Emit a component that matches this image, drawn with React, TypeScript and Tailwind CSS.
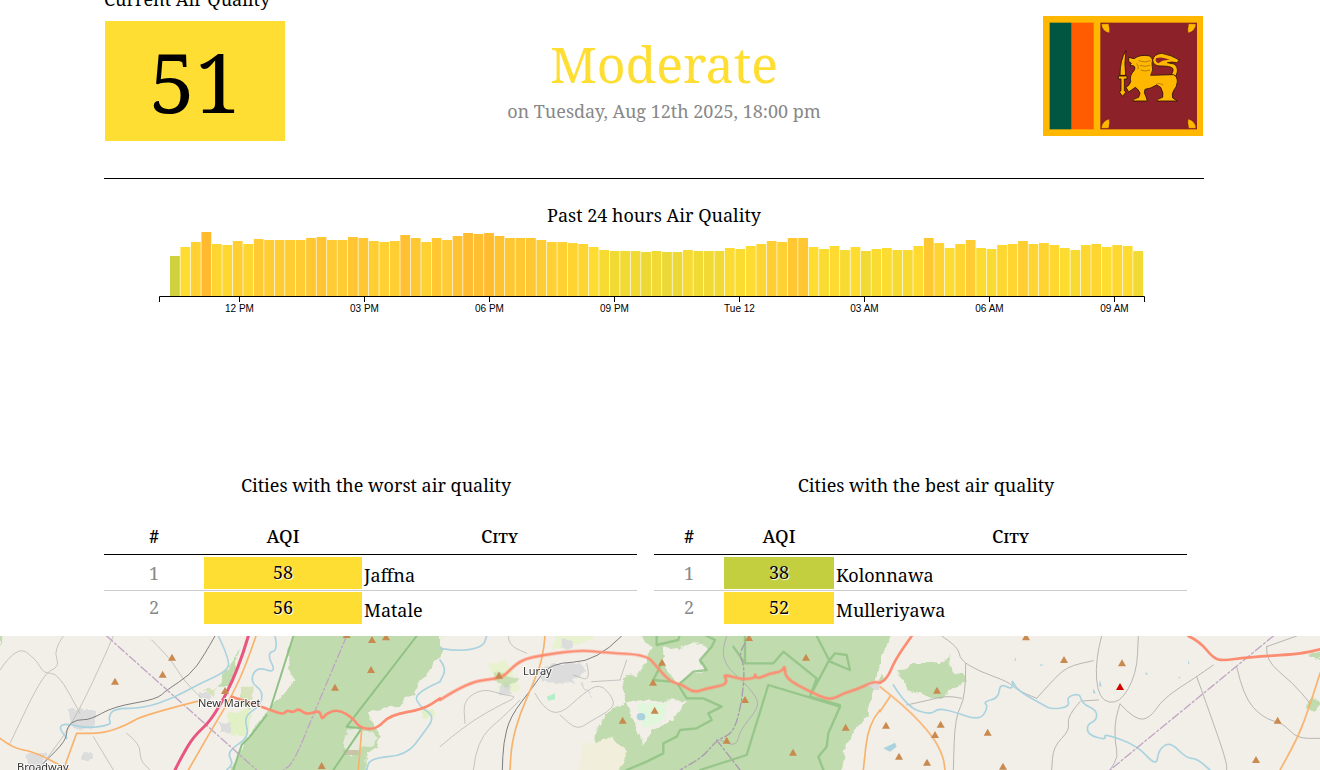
const serif = "font-['Noto_Serif','Droid_Serif','DejaVu_Serif',serif]"

const barTops = [
  168, 141, 126, 96, 132, 135, 123, 132, 117, 120, 120, 120, 120, 114, 111, 120, 120, 111, 114, 123, 126, 123, 105, 114,
  126, 114, 120, 108, 99, 102, 99, 108, 114, 114, 114, 120, 126, 126, 129, 132, 141, 150, 153, 153, 153, 156, 153, 156,
  156, 150, 153, 153, 153, 144, 147, 138, 132, 123, 126, 114, 114, 141, 147, 138, 150, 141, 153, 147, 144, 150, 150, 138,
  114, 129, 144, 132, 120, 144, 147, 135, 132, 123, 132, 129, 135, 144, 150, 135, 132, 141, 135, 138, 153,
]

const stops: [number, number[]][] = [
  [40, [207, 210, 62]],
  [44, [236, 217, 53]],
  [46, [247, 219, 51]],
  [49, [255, 220, 48]],
  [56, [255, 204, 51]],
  [64, [255, 186, 48]],
]

function barColor(h: number) {
  for (let i = 1; i < stops.length; i++) {
    if (h <= stops[i][0]) {
      const [h0, c0] = stops[i - 1]
      const [h1, c1] = stops[i]
      const t = (h - h0) / (h1 - h0)
      return `rgb(${c0.map((c, k) => Math.round(c + (c1[k] - c) * t)).join(',')})`
    }
  }
  return 'rgb(255,186,48)'
}

const ticks = [
  [239.5, '12 PM'],
  [364.5, '03 PM'],
  [489.5, '06 PM'],
  [614.5, '09 PM'],
  [739.5, 'Tue 12'],
  [864.5, '03 AM'],
  [989.5, '06 AM'],
  [1114.5, '09 AM'],
] as const

function Flag() {
  return (
    <svg className="mt-[-5px] h-[120px] w-[160px] shrink-0" viewBox="39 48 480 360">
      <rect x="39" y="48" width="480" height="360" fill="#ffb700" />
      <rect x="59" y="68" width="66" height="320" fill="#005641" />
      <rect x="125" y="68" width="66" height="320" fill="#ff5b00" />
      <rect x="211" y="68" width="290" height="320" fill="#8d2129" />
      {/* corner leaves */}
      <g fill="#ffb700" stroke="#5c1a10" strokeWidth="1">
        <path d="M214 72 L236 71 Q240 86 238 99 Q216 94 214 72z" />
        <path d="M498 72 L476 71 Q472 86 474 99 Q496 94 498 72z" />
        <path d="M214 385 L236 385 Q240 370 238 357 Q216 362 214 385z" />
        <path d="M498 385 L476 385 Q472 370 474 357 Q496 362 498 385z" />
      </g>
      <g fill="#ffb700" stroke="#2e1206" strokeWidth="2.5">
        {/* sword */}
        <path d="M288 152 Q270 178 270 226 L287 226 Q282 190 288 152z" />
        <path d="M265 228 L291 228 L291 237 L283 237 L283 272 L288 276 L278 289 L268 276 L273 272 L273 237 L265 237z" />
        {/* tail */}
        <path d="M368 180 Q372 162 395 160 Q425 165 448 180 L440 188 Q425 184 412 188 L432 192 Q444 200 442 216 Q440 228 432 232 L425 222 Q432 212 428 205 Q420 198 395 198 Q370 200 368 180z" />
        {/* lion */}
        <path d="M296 172 L312 176 Q330 162 360 168 Q372 178 366 192 Q372 210 362 226 L430 224 Q442 228 442 245 Q440 262 432 270 Q424 282 428 294 L442 303 L380 303 Q382 296 398 292 Q402 280 392 262 L380 255 Q362 266 345 268 Q340 278 348 290 L352 303 L308 303 Q310 296 326 292 L330 280 Q326 268 316 262 L296 276 L288 262 Q300 255 302 245 Q298 225 312 212 Q318 205 312 198 L300 196 L304 190 L296 184z" />
      </g>
      <path d="M378 175 Q395 168 420 180 Q398 178 385 190 Q374 185 378 175z" fill="#8d2129" />
      <path d="M326 182 q20 8 36 0 M330 196 q16 6 30 0 M332 210 q14 6 28 0 M320 190 q8 10 4 18 M400 255 q-10 -8 -22 -2" fill="none" stroke="#6b3a10" strokeWidth="1.4" />
    </svg>
  )
}

function Chart() {
  return (
    <svg className="ml-[55px] mt-px block h-[90px] w-[990px]" viewBox="159 230 990 90">
      {barTops.map((top, i) => {
        const h = (288 - top) / 3
        return <rect key={i} x={170 + i * 10.47} y={296 - h} width={9.8} height={h} fill={barColor(h)} />
      })}
      <path d="M159.5 302 V296.5 H1144.5 V302" fill="none" stroke="#000" />
      {ticks.map(([x, label]) => (
        <g key={label}>
          <line x1={x} x2={x} y1={296} y2={302} stroke="#000" />
          <text x={x} y={312} textAnchor="middle" fontSize={10} fontFamily="'Liberation Sans', sans-serif" fill="#000">
            {label}
          </text>
        </g>
      ))}
    </svg>
  )
}

type Row = { rank: number; aqi: number; color: string; city: string }

function CityTable({ title, rows, first, second, className }: { title: string; rows: Row[]; first: string; second: string; className: string }) {
  return (
    <div className={className}>
      <h3 className="pl-[11px] text-center text-[18px] leading-[27px] font-normal text-black">{title}</h3>
      <table className="mt-[22px] w-[533px] table-fixed border-collapse text-[18px] text-black">
        <colgroup>
          <col className={first} />
          <col className={second} />
          <col />
        </colgroup>
        <thead>
          <tr className="h-[33px] border-b border-b-black">
            <th className="pb-[2px] font-bold">#</th>
            <th className="pb-[2px] font-medium">AQI</th>
            <th className="pb-[2px] font-medium [font-variant:small-caps]">City</th>
          </tr>
        </thead>
        <tbody>
          {rows.map((r, i) => (
            <tr key={r.rank} className="border-b border-b-[#ccc] last:border-b-0">
              <td className={`p-0 text-center text-[#888] ${i === 0 ? 'pt-[2px]' : ''}`}>{r.rank}</td>
              <td className={`p-0 ${i === 0 ? 'pt-[2px] pb-px' : 'pt-px'}`}>
                <div className={`flex h-[32px] items-center justify-center ${r.color} [text-shadow:1px_1px_1px_#fff]`}>{r.aqi}</div>
              </td>
              <td className={`p-0 pl-[2px] ${i === 0 ? 'pt-[6px]' : 'pt-[6px]'}`}>{r.city}</td>
            </tr>
          ))}
        </tbody>
      </table>
    </div>
  )
}

const triangles: [number, number, number][] = [
  [0, 516, 83], [0, 488, 134], [0, 345, 155], [0, 675, 183], [0, 1116, 30], [0, 1158, 22], [0, 1040, 15], [0, 1113, 120], [0, 1005, 173], [0, 965, 408],
  [440, 927, 24], [440, 666, 98], [440, 1098, 83], [440, 177, 137], [440, 639, 158], [440, 915, 210], [440, 644, 242], [440, 548, 272], [440, 1217, 293], [440, 860, 332], [440, 1059, 368],
  [880, 438, 22], [880, 552, 90], [880, 726, 100], [880, 171, 182], [880, 18, 287], [880, 182, 284], [880, 165, 315], [880, 323, 308], [880, 57, 380], [880, 141, 398], [880, 369, 410], [880, 1193, 272], [880, 1128, 390],
]

// round off the traced polylines: quadratic through the midpoints
function smooth(d: string) {
  return d
    .split('M')
    .filter((s) => s.trim())
    .map((sub) => {
      const n = sub.match(/-?\d+(\.\d+)?/g)!.map(Number)
      const p: number[][] = []
      for (let i = 0; i < n.length; i += 2) p.push([n[i], n[i + 1]])
      let out = `M${p[0][0]} ${p[0][1]}`
      for (let i = 1; i < p.length - 1; i++) {
        out += ` Q${p[i][0]} ${p[i][1]} ${(p[i][0] + p[i + 1][0]) / 2} ${(p[i][1] + p[i + 1][1]) / 2}`
      }
      const last = p[p.length - 1]
      return `${out} L${last[0]} ${last[1]}`
    })
    .join(' ')
}

// everything below is traced in zoom space: x = x0 + zx / 3, y = 630 + zy / 3
const Z = ({ x0, children }: { x0: number; children: React.ReactNode }) => (
  <g transform={`translate(${x0} 630) scale(0.33333)`} fill="none" strokeLinejoin="round" strokeLinecap="round">
    {children}
  </g>
)

const Line = ({ d, stroke, w, ...rest }: { d: string; stroke: string; w: number; opacity?: number; strokeDasharray?: string }) => (
  <path d={smooth(d)} stroke={stroke} strokeWidth={w} {...rest} />
)

function MapView() {
  return (
    <svg className="block h-[134px] w-[1320px]" viewBox="0 636 1320 134">
      <defs>
        <filter id="rough" x="0" y="620" width="1320" height="170" filterUnits="userSpaceOnUse">
          <feTurbulence type="fractalNoise" baseFrequency="0.09" numOctaves="3" seed="4" result="noise" />
          <feDisplacementMap in="SourceGraphic" in2="noise" scale="9" xChannelSelector="R" yChannelSelector="G" />
        </filter>
      </defs>
      <rect x="0" y="636" width="1320" height="134" fill="#f2efe9" />
      {/* forests */}
      <g filter="url(#rough)">
        <Z x0={0}>
          <path d="M880 0 L1320 0 L1320 75 L1240 190 L1200 225 L1100 250 L1130 300 L1150 325 L1100 375 L1100 440 L680 440 L730 340 L790 260 L840 200 L890 150 L860 100z" fill="#c0dbad" />
          <path d="M0 0 L15 0 L0 50z" fill="#c0dbad" />
          <path d="M1040 300 L1085 295 L1140 330 L1050 380 L1030 340z" fill="#f2efe9" opacity="0.75" />
          <path d="M650 170 L720 60 L690 170z" fill="#c0dbad" />
          <path d="M680 250 L750 235 L740 320 L690 310z" fill="#e2f0c5" />
          <path d="M620 180 L650 170 L640 200z M720 170 L755 170 L750 240 L720 220z" fill="#d6e3bb" />
          <path d="M205 240 h80 v55 h-60z M600 190 h30 v20 h-30z M80 370 h55 v60 h-55z M660 280 h30 v25 h-30z M250 370 h25 v20 h-25z" fill="#dcdcdc" />
          <path d="M1265 240 h35 l5 20 h-40z" fill="#e2f0c5" />
        </Z>
        <Z x0={440}>
          <path d="M0 0 H30 L10 40z M340 0 H500 L380 60 L340 60z M140 95 L200 90 L240 180 L180 190z" fill="#e8f2cf" />
          <path d="M560 0 L1320 0 L1320 100 L1280 260 L1230 310 L1200 440 L470 440 L470 300 L500 250 L560 215 L545 150 L600 130 L640 45z" fill="#c0dbad" />
          <path d="M665 60 L770 40 L815 50 L780 90 L790 120 L740 130 L715 165 L680 130z" fill="#f2efe9" />
          <path d="M560 215 L740 210 L700 270 L640 300 L610 345 L590 300 L570 240z" fill="#f2efe9" />
          <path d="M590 225 L690 215 L660 280 L610 290z" fill="#e0f7dc" />
          <path d="M430 340 L520 325 L560 370 L530 440 L410 440z" fill="#f1efdc" />
          <path d="M330 100 H420 L440 125 L400 150 L470 215 L430 165 L360 160 L300 150 L290 125z M180 160 h30 v35 h-30z" fill="#dcdcdc" />
          <path d="M365 28 h35 v30 h-35z" fill="#dcdcdc" />
          <path d="M160 125 L240 150 L200 175 L160 150z" fill="#c0dbad" opacity="0.8" />
          <path d="M1285 160 h35 v20 h-20z" fill="#dcdcdc" />
        </Z>
        <Z x0={880}>
          <path d="M0 0 H40 L20 45 L0 80z" fill="#c0dbad" />
          <path d="M0 135 L20 150 L0 155z" fill="#c0dbad" />
          <path d="M50 125 L95 100 L140 98 L195 95 L205 70 L215 130 L250 135 L255 150 L215 180 L190 205 L150 205 L85 180z" fill="#c0dbad" />
          <path d="M1285 70 L1320 65 L1320 90 L1285 85z M1275 235 L1295 200 L1320 225 L1295 240z" fill="#c0dbad" />
        </Z>
      </g>
      <Z x0={440}>
        <ellipse cx="603" cy="260" rx="13" ry="11" fill="#aad3df" />
        <path d="M320 200 L345 190 L345 208 L325 212z" fill="#b5efc8" />
      </Z>
      <Z x0={0}>
        <path d="M1030 360 h45 v15 h-45z" fill="#c9c4a8" />
      </Z>
      <Z x0={880}>
        <path d="M10 355 L45 338 L50 350 L30 365z M660 150 l5 20 -8 -3z M640 175 l7 15 -8 0z M798 125 l6 10 -8 -2z M925 90 l3 12 -4 0z M405 80 l4 12 -5 0z M480 103 l12 2 -10 3z M895 142 l8 -2 -6 6z" fill="#aad3df" />
      </Z>
      {/* thin county lines */}
      <Z x0={0}>
        <Line d="M0 120 L50 45 L110 90 L130 130 L175 130 L240 250 M340 18 L240 250 L130 400 M190 18 L160 60 L180 110 L130 130 L30 340 M455 30 L490 65 L520 100 L550 150 L600 200 M380 310 L420 340 L420 390 L450 420 M280 320 L340 420" stroke="#bdbbb6" w={2.5} />
      </Z>
      <Z x0={440}>
        <Line d="M0 350 L70 290 L170 230 L235 200 L190 195 L130 175 L70 210 L75 280 M100 420 L110 330 L190 260 L240 210 M285 190 L310 235 L360 255 L430 190 L480 160 L520 205 L520 235 L450 275 L410 300 L360 255 M440 100 L455 155 L400 135 M540 150 L455 155 M205 18 L205 45 L260 70 M540 150 L560 90" stroke="#bdbbb6" w={2.5} />
        <Line d="M860 18 L845 60 L860 110 L900 145 L950 200 L955 235 L900 300 L890 350 L840 330" stroke="#b3aeb3" w={3} />
      </Z>
      <Z x0={880}>
        <Line d="M185 18 L235 50 L240 90 L300 125 L385 155 L410 180 L470 205 M257 100 L258 200 L225 260 L220 420 M80 225 L140 212 L200 197 L245 205 M470 205 L510 160 L560 110 L640 92 M665 18 L645 90 L655 210 L720 222 L770 130 L775 18 M605 213 L655 210 M600 215 L560 260 L570 300 L520 350 L515 420 M720 222 L705 265 L705 340 L715 380 L690 420 M720 222 L765 270 L810 265 L850 205 L950 140 L1000 105 M950 140 L1015 320 L1040 400 L1040 420 M1160 50 L1155 90 L1240 160 L1290 220 M1070 110 L1090 200 L1150 265 L1210 280 L1250 325 L1320 325 M1160 50 L1250 18" stroke="#b8b6b2" w={3} />
      </Z>
      {/* protected area borders */}
      <Z x0={0}>
        <path d="M880 18 L810 240 M1250 18 L1040 290 L1085 295 L1000 420 M800 255 L750 320 L725 345 L700 420" stroke="#8fc284" strokeWidth="6" />
      </Z>
      <Z x0={440}>
        <path d="M985 165 L1200 230 L1165 310 L1160 350 L1135 380 L1150 420 M780 420 L920 375 L985 165 M650 18 L650 45 L715 30 L718 18 M800 18 L825 30 L815 50 L780 90 L800 120 L760 125 L715 165 L740 205 L790 205 L845 230 L805 250 L815 270 L770 295 L720 300 L710 320 L670 340 L670 370 L620 395 L560 420 M880 50 L915 100 L1000 100 L1030 65 L1130 145 L1110 200 L1200 225 M915 18 L915 100 M1130 18 L1170 95 L1230 120 L1220 75 L1185 70 L1165 95 L1120 180 M665 100 L640 150 L690 155" stroke="#8fc284" strokeWidth="7" opacity="0.85" />
      </Z>
      {/* rivers */}
      <Z x0={0}>
        <Line d="M655 18 L690 90 L680 125 L600 160 L520 205 L430 235 L340 235 L325 265 L335 285 L260 295 L200 280 L175 290 L200 325 M825 18 L835 60 L800 70 L830 130 L770 110 L750 155 L790 185 L780 228 L730 260 L750 320 L680 365 L700 400 L680 420 M1320 155 L1240 190 L1260 230 L1305 260 L1270 310 L1220 375 L1110 385 L1100 420" stroke="#aad3df" w={5} />
      </Z>
      <Z x0={440}>
        <Line d="M0 55 L60 65 L130 50 L140 18 M0 90 L20 115 L0 155" stroke="#aad3df" w={5} />
      </Z>
      <Z x0={880}>
        <Line d="M40 165 L80 230 L150 255 L175 235 L220 245 L300 272 L325 230 L310 215 L355 205 L360 160 L400 180 L395 145 L410 180 L490 225 L515 238 L570 230 L560 200 L600 190 L605 220 L650 240 L650 270 L620 285 L625 315 L680 330 L670 310 L770 345 L830 410 L835 360 L870 335 L920 385 L950 385 L990 420" stroke="#aad3df" w={5} />
      </Z>
      {/* rail and admin dash lines */}
      <Z x0={0}>
        <Line d="M645 18 L610 80 L570 135 L500 180 L470 208 L340 230 L270 270 L230 268 L200 290 L200 330 L130 400" stroke="#7d7d7d" w={3} />
        <Line d="M320 18 L770 420 M1040 18 L950 230 L880 400 L850 420" stroke="#bfa6c4" w={4} strokeDasharray="24 8 6 8" />
      </Z>
      <Z x0={440}>
        <Line d="M545 18 L470 95 L330 98 L280 170 L210 260 L190 340 L187 420" stroke="#7d7d7d" w={3} />
        <Line d="M915 40 L895 70 L915 110 L905 220 L880 310 L830 330 L790 380 L720 420 M830 330 L900 420" stroke="#a99aae" w={4} strokeDasharray="24 8 6 8" />
      </Z>
      <Z x0={880}>
        <Line d="M1180 18 L690 420" stroke="#bfa6c4" w={4} strokeDasharray="24 8 6 8" />
      </Z>
      {/* orange roads */}
      <Z x0={0}>
        <Line d="M768 18 L740 100 L695 200 L640 290 L565 420 M0 325 L40 355 L100 365 L170 400 L205 420 M600 212 L430 255 L380 285 L310 310 L230 310 M230 310 L190 420 M1085 300 L1075 420" stroke="#f9b26c" w={5} />
        <Line d="M745 18 L715 120 L640 265 L580 320 L545 380 L525 420" stroke="#e8567f" w={9} />
      </Z>
      <Z x0={440}>
        <Line d="M315 18 L310 80 L280 160 L240 250 L215 340 L210 420 M1320 240 L1285 280 L1270 420" stroke="#f9b26c" w={5} />
      </Z>
      <Z x0={880}>
        <Line d="M0 170 L75 228 L160 320 L190 380 L195 420 M30 200 L0 245 M1320 130 L1290 225 L1255 320 L1200 420" stroke="#f9b26c" w={5} />
      </Z>
      {/* trunk road */}
      <Z x0={0}>
        <Line d="M695 200 L780 228 L850 255 L860 240 L880 248 L895 235 L920 255 L960 240 L965 270 L980 250 L1015 238 L1060 265 L1080 295 L1130 298 L1170 255 L1270 238 L1320 205" stroke="#fc8d72" w={8} />
      </Z>
      <Z x0={440}>
        <Line d="M0 210 L80 158 L170 145 L190 140 L240 90 L310 75 L420 60 L500 68 L620 75 L650 110 L690 155 L730 165 L760 188 L800 175 L855 165 L860 150 L850 132 L900 148 L945 145 L945 130 L950 148 L990 130 L1025 125 L1035 105 L1035 145 L1110 185 L1170 212 L1210 190 L1250 178 L1300 155 L1320 158" stroke="#fc8d72" w={8} />
      </Z>
      <Z x0={880}>
        <Line d="M0 158 L20 150 L45 90 L95 18 M925 18 L960 35 L1000 85 L1030 92 L1100 82 L1260 72 L1320 58" stroke="#fc8d72" w={8} />
      </Z>
      {/* peaks */}
      {triangles.map(([x0, zx, zy], i) => {
        const x = x0 + zx / 3
        const y = 630 + zy / 3
        return <path key={i} d={`M${x - 4} ${y + 3} L${x} ${y - 4} L${x + 4} ${y + 3}z`} fill="#c98a4f" />
      })}
      <path d="M1116 690 L1120 683 L1124 690z" fill="#d40000" />
      {/* labels */}
      <g fontFamily="'Noto Sans', sans-serif" fontSize={11} fill="#333" stroke="#fff" strokeWidth={2} strokeOpacity={0.75} paintOrder="stroke">
        <text x="198" y="707">New Market</text>
        <text x="523" y="675">Luray</text>
        <text x="17" y="771">Broadway</text>
      </g>
    </svg>
  )
}

export default function App() {
  return (
    <div className={`h-[770px] w-[1320px] overflow-hidden bg-white ${serif}`}>
      <div className="ml-[104px] mt-[-14px] w-[1100px]">
        <p className="text-[18px] leading-[27px] text-black">Current Air Quality</p>
        <div className="mt-[8px] flex items-start">
          <div className="ml-px flex h-[120px] w-[180px] items-center justify-center bg-[#ffde33] text-[82px] leading-none text-black">51</div>
          <div className="w-[758px] pt-[13px] text-center">
            <div className="text-[50px] leading-[60px] text-[#ffde33]">Moderate</div>
            <div className="mt-[4px] text-[18px] leading-[27px] text-[#888]">on Tuesday, Aug 12th 2025, 18:00 pm</div>
          </div>
          <Flag />
        </div>
        <hr className="mt-[37px] border-t border-black" />
        <h3 className="mt-[23px] text-center text-[18px] leading-[27px] font-normal text-black">Past 24 hours Air Quality</h3>
        <Chart />
        <div className="mt-[152px] flex">
          <CityTable
            className="w-[533px]"
            title="Cities with the worst air quality"
            first="w-[100px]"
            second="w-[158px]"
            rows={[
              { rank: 1, aqi: 58, color: 'bg-[#ffde33]', city: 'Jaffna' },
              { rank: 2, aqi: 56, color: 'bg-[#ffde33]', city: 'Matale' },
            ]}
          />
          <CityTable
            className="ml-[17px] w-[533px]"
            title="Cities with the best air quality"
            first="w-[70px]"
            second="w-[110px]"
            rows={[
              { rank: 1, aqi: 38, color: 'bg-[#c3cf3f]', city: 'Kolonnawa' },
              { rank: 2, aqi: 52, color: 'bg-[#ffde33]', city: 'Mulleriyawa' },
            ]}
          />
        </div>
      </div>
      <div className="mt-[12px]">
        <MapView />
      </div>
    </div>
  )
}
